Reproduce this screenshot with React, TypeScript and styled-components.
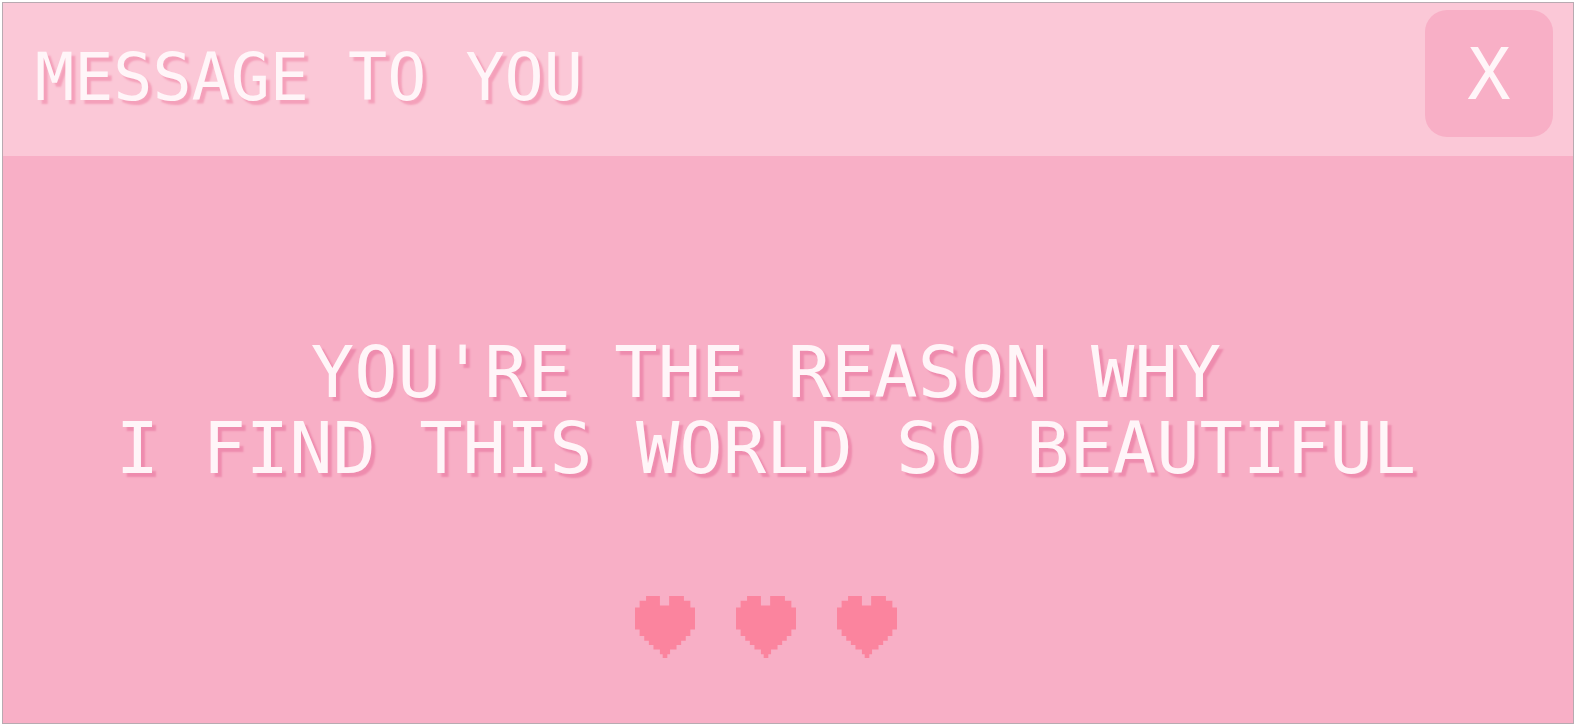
import React from "react";
import styled, { createGlobalStyle } from "styled-components";

const GlobalStyle = createGlobalStyle`
  *, *::before, *::after { box-sizing: border-box; }
  body { margin: 0; background: #ffffff; }
`;

const Page = styled.div`
  min-height: 100vh;
  display: flex;
  padding: 2px 1px 1px 2px;
  font-family: "DejaVu Sans Mono", "Liberation Mono", monospace;
  color: #fff5f8;
`;

const Dialog = styled.section`
  flex: 1;
  display: flex;
  flex-direction: column;
  border: 1px solid #b8aab1;
  background: #f8afc6;
`;

const TitleBar = styled.header`
  display: flex;
  align-items: center;
  justify-content: space-between;
  padding: 7px 20px 19px 32px;
  background: #fbc8d7;
`;

const Title = styled.h1`
  margin: 0;
  padding-top: 8px;
  font-size: 65px;
  font-weight: 400;
  line-height: 76px;
  text-shadow: 4px 4px 2px #f4a0ba;
`;

const CloseButton = styled.button`
  width: 128px;
  height: 127px;
  padding: 0;
  border: 0;
  border-radius: 22px;
  background: #f8afc6;
  color: inherit;
  font-family: inherit;
  font-size: 72px;
  line-height: 76px;
  cursor: pointer;
`;

const Body = styled.main`
  flex: 1;
  display: flex;
  flex-direction: column;
  align-items: center;
  gap: 110px;
  padding: 178px 44px 62px 0;
`;

const Message = styled.p`
  margin: 0;
  font-size: 72px;
  line-height: 76px;
  text-align: center;
  text-shadow: 4px 4px 2px #ee8cae;
`;

const Hearts = styled.div`
  display: flex;
  gap: 41px;
`;

const HeartIcon = styled.svg`
  display: block;
  width: 60px;
  height: 62px;
  fill: #fb849e;
`;

const Heart = () => (
  <HeartIcon viewBox="0 0 13 13" preserveAspectRatio="none" aria-hidden="true">
    <path d="M2.4 0H5.4V2H7.4V0H10.6V1H12V2.4H13V7H12V8.4H11V9.4H10V10.3H9V11.2H7.6V12.2H7V13H6V12.2H5.4V11.2H4V10.3H3V9.4H2V8.4H1V7H0V2.4H1V1H2.4Z" />
  </HeartIcon>
);

export default function App() {
  return (
    <>
      <GlobalStyle />
      <Page>
        <Dialog aria-labelledby="dialog-title">
          <TitleBar>
            <Title id="dialog-title">MESSAGE TO YOU</Title>
            <CloseButton type="button">X</CloseButton>
          </TitleBar>
          <Body>
            <Message>
              YOU'RE THE REASON WHY
              <br />I FIND THIS WORLD SO BEAUTIFUL
            </Message>
            <Hearts>
              <Heart />
              <Heart />
              <Heart />
            </Hearts>
          </Body>
        </Dialog>
      </Page>
    </>
  );
}
